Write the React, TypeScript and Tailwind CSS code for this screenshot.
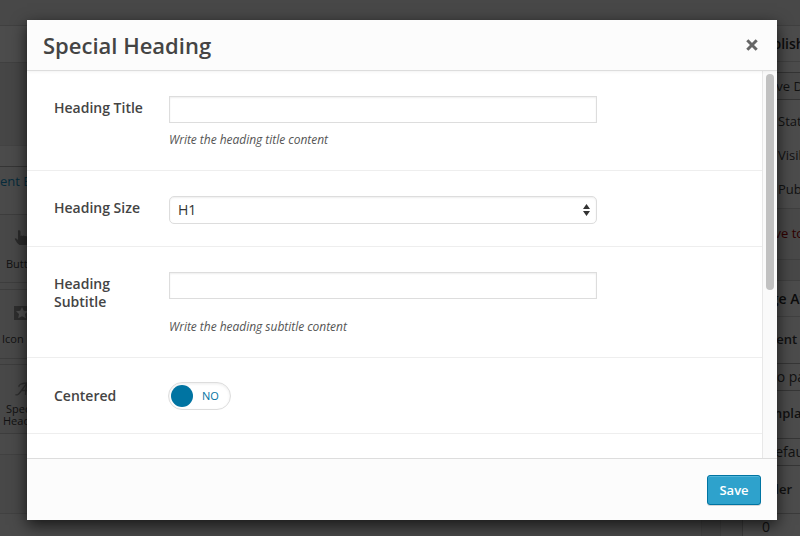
import React from "react";

type BandProps = { className: string; children?: React.ReactNode };

function Band({ className, children }: BandProps) {
  return <div className={`w-full shrink-0 whitespace-nowrap ${className}`}>{children}</div>;
}

function ElementsColumn() {
  return (
    <div className="flex w-[100px] flex-col overflow-hidden text-[11px] leading-3 text-[#111111]">
      <Band className="h-[25px]" />
      <Band className="h-[37px] border-t border-[#404040] bg-[#4c4c4c]" />
      <Band className="h-[83px] border-t border-[#404040] bg-[#464646]" />
      <Band className="h-[21px] border-t border-[#434343] bg-[#4b4b4b]" />
      <Band className="h-[48px] border-t border-[#353535] bg-[#4a4a4a] pt-[5px] text-[13px] leading-[18px] text-[#062b3b]">
        ent Elements
      </Band>
      <Band className="h-[69px] border-y border-[#3d3d3d] bg-[#484848] pt-[15px]">
        <svg className="ml-[14px] block h-4 w-[15px]" viewBox="0 0 15 16" fill="#2b2b2b">
          <path d="M4 1.5Q4-.2 5.300.2T6.500 2v4q1-1 2.200 0 1.200-1 2.300.3 1.500-.6 2.200.8l1.500.5v3.500L13 15H5.500Q3 13.500 1 9.500.5 8 2 8.200l2 1.800z" />
        </svg>
        <p className="pt-[12px] pl-[6px]">Button</p>
      </Band>
      <Band className="h-[6px]" />
      <Band className="h-[70px] border-y border-[#3d3d3d] bg-[#484848] pt-[16px]">
        <svg className="ml-[14px] block h-[14px] w-[17px]" viewBox="0 0 17 14">
          <path fill="#2e2e2e" d="M0 0h17v14H0z" />
          <path fill="#505050" d="m8 1 1.800 3.800 4.200.5-3 2.800.8 4.200L8 10.200l-3.800 2.100.8-4.200-3-2.800 4.200-.5z" />
        </svg>
        <p className="pt-[13px] pl-[2px]">Icon Box</p>
      </Band>
      <Band className="h-[5px]" />
      <Band className="h-[70px] border-y border-[#3d3d3d] bg-[#484848] pt-[17px]">
        <svg className="ml-[15px] block h-[14px] w-4" viewBox="0 0 16 14" fill="none" stroke="#2e2e2e" strokeWidth="1.3">
          <path d="M.5 12.500q2 1.500 4.500-2L12 1q-1.500 6-1.500 12M6 8.500h6M4 5Q3 1.500 12 1" />
        </svg>
        <p className="pt-[7px] pl-[6px]">Special</p>
        <p className="pl-[3px]">Heading</p>
      </Band>
      <Band className="h-[20px] bg-[#4a4a4a]" />
      <Band className="h-[60px] border-y border-[#414141] bg-[#484848]" />
      <Band className="h-[22px] bg-[#4a4a4a]" />
    </div>
  );
}

function SettingsColumn() {
  return (
    <div className="flex w-[58px] flex-col overflow-hidden bg-[#4c4c4c] text-[13px] leading-[18px] text-[#111111]">
      <Band className="h-[25px] bg-[#484848]" />
      <Band className="h-[36px] border-t border-[#404040] pt-[9px] pl-[13px] text-[14px] font-semibold text-[#0c0c0c]">
        Publish
      </Band>
      <Band className="h-[11px] border-t border-[#414141]" />
      <Band className="h-[28px] border-y border-[#343434] bg-[#494949] pt-[4px] pl-[20px]">Save Draft</Band>
      <Band className="h-[108px] pt-[12px] pl-[36px]">
        <p>Status:</p>
        <p className="pt-4">Visibility:</p>
        <p className="pt-4">Publish</p>
      </Band>
      <Band className="h-[52px] border-y border-[#404040] bg-[#494949] pt-[15px] pl-[13px] text-[#300000]">
        Move to Trash
      </Band>
      <Band className="h-[20px] bg-[#484848]" />
      <Band className="h-[36px] border-t border-[#404040] pt-[9px] pl-[12px] text-[14px] font-semibold text-[#0c0c0c]">
        Page Attributes
      </Band>
      <Band className="h-[47px] border-t border-[#414141] pt-[13px] pl-[13px] font-semibold">Parent</Band>
      <Band className="h-[28px] border-y border-[#363636] pt-[4px] pl-[22px] text-[14px]">(no parent)</Band>
      <Band className="h-[47px] pt-[13px] pl-[13px] font-semibold">Template</Band>
      <Band className="h-[28px] border-y border-[#363636] pt-[4px] pl-[23px] text-[14px]">Default</Band>
      <Band className="h-[47px] pt-[14px] pl-[13px] font-semibold">Order</Band>
      <Band className="h-[23px] border-t border-l border-[#3b3b3b] pt-[4px] pl-[19px] text-[14px]">0</Band>
    </div>
  );
}

function TextInput({ label }: { label: string }) {
  return (
    <input
      aria-label={label}
      className="block h-[27px] w-[428px] border border-[#dddddd] bg-white px-2 text-[14px] shadow-[inset_0_1px_2px_rgba(0,0,0,0.07)] outline-none"
    />
  );
}

function Field({ label, className, children }: { label: string; className: string; children: React.ReactNode }) {
  return (
    <div className={`flex border-b border-[#eeeeee] pl-[27px] ${className}`}>
      <div className="w-[115px] shrink-0 pt-[3px] pr-5 text-[14px] leading-[18px] font-semibold text-[#444444]">
        {label}
      </div>
      <div>{children}</div>
    </div>
  );
}

export default function App() {
  return (
    <main className="relative flex h-[536px] w-[800px] justify-between overflow-hidden bg-[#484848] font-['Open_Sans','Noto_Sans',sans-serif]">
      <ElementsColumn />
      <div className="flex flex-1 items-end justify-end">
        <div className="mr-[21px] h-[22px] w-[20px] border-x border-[#414141] bg-[#454545]" />
      </div>
      <SettingsColumn />

      <section className="absolute top-[20px] left-[27px] flex h-[500px] w-[750px] flex-col bg-white shadow-[0_5px_15px_rgba(0,0,0,0.7)]">
        <header className="z-10 flex h-[51px] shrink-0 items-center justify-between border-b border-[#dddddd] bg-[#fcfcfc] pr-[19px] pl-[16px] shadow-[0_1px_3px_rgba(0,0,0,0.05)]">
          <h1 className="text-[22px] leading-[30px] font-semibold text-[#444444]">Special Heading</h1>
          <button aria-label="Close" className="h-3 w-3">
            <svg className="block h-3 w-3" viewBox="0 0 12 12" fill="none" stroke="#666666" strokeWidth="3">
              <path d="m1.300 1.300 9.400 9.400m0-9.400-9.400 9.400" />
            </svg>
          </button>
        </header>

        <div className="flex h-[387px] shrink-0 overflow-hidden">
          <div className="w-[736px] border-r border-[#e8e8e8]">
            <Field label="Heading Title" className="h-[100px] pt-[25px]">
              <TextInput label="Heading Title" />
              <p className="pt-[8px] text-[12px] leading-[17px] tracking-[-0.03px] text-[#555555] italic">
                Write the heading title content
              </p>
            </Field>
            <Field label="Heading Size" className="h-[76px] pt-[25px]">
              <div className="flex h-[28px] w-[428px] items-center justify-between rounded-[5px] border border-[#dddddd] bg-white pr-[6px] pl-[8px] text-[14px] text-[#333333] shadow-[inset_0_1px_2px_rgba(0,0,0,0.07)]">
                <span className="pb-[2px]">H1</span>
                <svg className="h-3 w-[7px]" viewBox="0 0 7 12" fill="#333333">
                  <path d="M3.500 0 7 5H0zM0 7h7l-3.500 5z" />
                </svg>
              </div>
            </Field>
            <Field label="Heading Subtitle" className="h-[111px] pt-[25px]">
              <TextInput label="Heading Subtitle" />
              <p className="pt-[19px] text-[12px] leading-[17px] tracking-[-0.03px] text-[#555555] italic">
                Write the heading subtitle content
              </p>
            </Field>
            <Field label="Centered" className="h-[76px] pt-[26px]">
              <div className="-mt-[2px] -ml-px flex h-[28px] w-[63px] items-center rounded-full border border-[#dddddd] bg-white pl-[2px] shadow-[inset_0_1px_3px_rgba(0,0,0,0.08)]">
                <span className="h-[22px] w-[22px] rounded-full bg-[#0074a2]" />
                <span className="pl-[9px] text-[11px] leading-[16px] text-[#0074a2]">NO</span>
              </div>
            </Field>
          </div>
          <div className="flex flex-1 justify-center bg-[#fafafa] pt-[3px]">
            <div className="h-[216px] w-[8px] rounded-full bg-[#c1c1c1]" />
          </div>
        </div>

        <footer className="flex flex-1 items-center justify-end border-t border-[#dddddd] bg-[#fcfcfc] pr-[16px]">
          <button className="h-[30px] w-[54px] rounded-[3px] border border-[#0074a2] bg-[#2ea2cc] pt-[2px] text-[13px] font-semibold text-white shadow-[inset_0_1px_0_rgba(120,200,230,0.5),0_1px_0_rgba(0,0,0,0.15)]">
            Save
          </button>
        </footer>
      </section>
    </main>
  );
}
